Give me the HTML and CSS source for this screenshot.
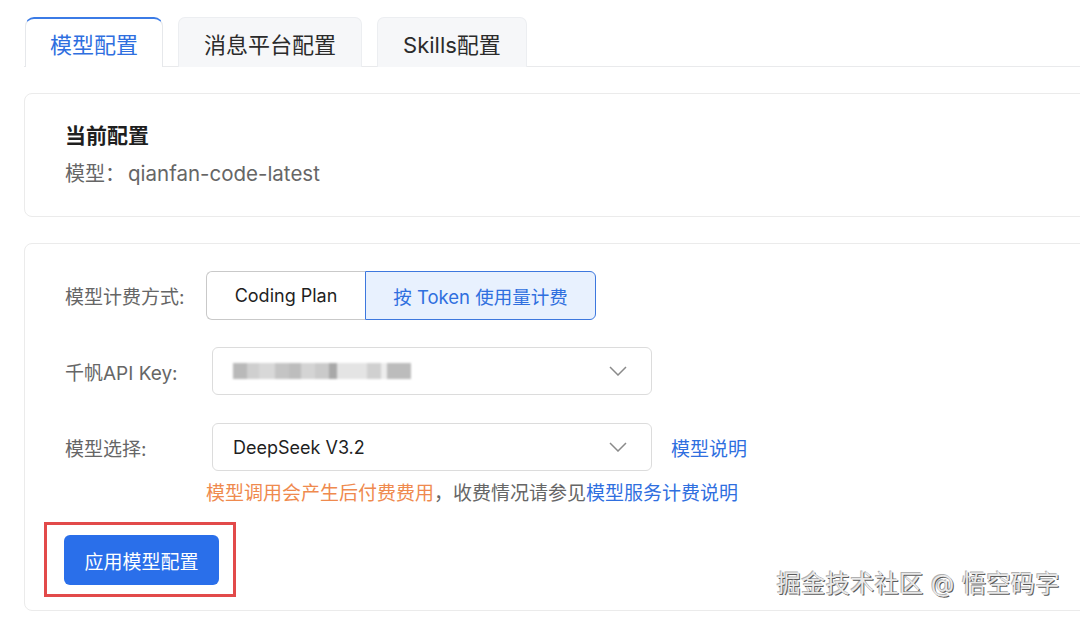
FILE: index.html
```html
<!DOCTYPE html>
<html lang="zh-CN">
<head>
    <meta charset="UTF-8">
    <meta name="viewport" content="width=device-width, initial-scale=1.0">
    <title>模型配置</title>
    <link rel="stylesheet" href="styles.css">
</head>
<body>
    <div class="page">
        <div class="tabs">
            <button class="tab active">模型配置</button>
            <button class="tab">消息平台配置</button>
            <button class="tab">Skills配置</button>
        </div>

        <!-- Current config -->
        <div class="card current">
            <div class="card-title">当前配置</div>
            <div class="card-sub">模型：<span class="model-name">qianfan-code-latest</span></div>
        </div>

        <!-- Config form -->
        <div class="card form">
            <div class="row">
                <label class="label label-narrow">模型计费方式:</label>
                <div class="segmented">
                    <button class="seg">Coding Plan</button>
                    <button class="seg active">按 Token 使用量计费</button>
                </div>
            </div>

            <div class="row">
                <label class="label">千帆API Key:</label>
                <div class="select">
                    <div class="masked">
                        <span style="width:14px;background:#b9b9b9"></span>
                        <span style="width:12px;background:#cfcfcf"></span>
                        <span style="width:16px;background:#d8d8d8"></span>
                        <span style="width:14px;background:#c4c4c4"></span>
                        <span style="width:12px;background:#bdbdbd"></span>
                        <span style="width:14px;background:#d4d4d4"></span>
                        <span style="width:14px;background:#cacaca"></span>
                        <span style="width:8px;background:#a8a8a8"></span>
                        <span style="width:30px;background:#e4e4e4"></span>
                        <span style="width:14px;background:#d0d0d0"></span>
                        <span style="width:6px;background:#ededed"></span>
                        <span style="width:24px;background:#bcbcbc"></span>
                    </div>
                    <svg class="chevron" width="18" height="10" viewBox="0 0 18 10"><path d="M1 1l8 8 8-8" fill="none" stroke="#8a8a8a" stroke-width="1.5"/></svg>
                </div>
            </div>

            <div class="row">
                <label class="label">模型选择:</label>
                <div class="select">
                    <span class="select-value">DeepSeek V3.2</span>
                    <svg class="chevron" width="18" height="10" viewBox="0 0 18 10"><path d="M1 1l8 8 8-8" fill="none" stroke="#8a8a8a" stroke-width="1.5"/></svg>
                </div>
                <a href="#" class="link">模型说明</a>
            </div>

            <div class="hint">
                <span class="warn">模型调用会产生后付费费用</span>，收费情况请参见<a href="#" class="link">模型服务计费说明</a>
            </div>

            <div class="highlight">
                <button class="primary">应用模型配置</button>
            </div>
        </div>
    </div>

    <div class="watermark">掘金技术社区 @ 悟空码字</div>
</body>
</html>
```

FILE: styles.css
```css
:root {
    --blue: #2f6fdf;
    --text: #1f1f1f;
    --muted: #666;
    --line: #e9eaec;
}
* {
    box-sizing: border-box;
    margin: 0;
    padding: 0;
}
body {
    font-family: Inter, "Noto Sans CJK SC", sans-serif;
    background: #fff;
    color: var(--text);
    width: 1080px;
    height: 617px;
    overflow: hidden;
    position: relative;
}
.page {
    padding: 17px 0 0 24px;
    overflow: hidden;
}
.tabs {
    display: flex;
    gap: 15px;
    border-bottom: 1px solid var(--line);
    padding-left: 1px;
}
.tab {
    height: 50px;
    padding: 0 25px;
    font-family: inherit;
    font-size: 22px;
    color: #2b2b2b;
    background: #f6f7f9;
    border: 1px solid #eceef1;
    border-bottom: none;
    border-radius: 7px 7px 0 0;
    margin-bottom: -1px;
    cursor: pointer;
}
.tab.active {
    padding: 0 24px;
    color: var(--blue);
    background: #fff;
    border-top: 2px solid #3b7be6;
    border-color: #3b7be6 #e6e8eb #fff;
    border-radius: 9px 9px 0 0;
}
.card {
    border: 1px solid #ebebeb;
    border-radius: 8px;
    margin-right: -20px;
    background: #fff;
}
.current {
    margin-top: 26px;
    padding: 28px 40px 28px;
}
.card-title {
    font-size: 21px;
    font-weight: 700;
    line-height: 28px;
    margin-bottom: 10px;
}
.card-sub {
    font-size: 20px;
    line-height: 28px;
    color: var(--muted);
}
.model-name {
    font-size: 20.5px;
    margin-left: 3px;
}
.form {
    margin-top: 26px;
    padding: 27px 40px 13px;
}
.row {
    display: flex;
    align-items: center;
    margin-bottom: 27px;
}
.row:nth-child(2) {
    margin-bottom: 28px;
}
.row:nth-child(3) {
    margin-bottom: 11px;
}
.label {
    width: 147px;
    flex-shrink: 0;
    font-size: 19px;
    color: var(--muted);
}
.label-narrow {
    width: 141px;
}
.segmented {
    display: flex;
    height: 49px;
}
.seg {
    font-family: inherit;
    font-size: 18px;
    color: var(--text);
    background: #fff;
    border: 1px solid #c9c9c9;
    padding: 0 20px;
    cursor: pointer;
}
.seg:first-child {
    width: 159px;
    border-radius: 6px 0 0 6px;
    border-right: none;
}
.seg.active {
    width: 231px;
    font-size: 18.5px;
    color: var(--blue);
    background: #e8f1fe;
    border: 1.5px solid #3d78de;
    border-radius: 0 6px 6px 0;
}
.select {
    width: 440px;
    height: 48px;
    border: 1px solid #dcdcdc;
    border-radius: 6px;
    display: flex;
    align-items: center;
    justify-content: space-between;
    padding: 0 24px 0 20px;
}
.select-value {
    font-size: 18px;
}
.masked {
    display: flex;
    height: 16px;
    filter: blur(1px);
}
.masked span {
    height: 100%;
}
.link {
    color: var(--blue);
    text-decoration: none;
    font-size: 19px;
}
.row .link {
    margin-left: 19px;
}
.hint {
    margin-left: 141px;
    font-size: 19px;
    line-height: 24px;
    color: var(--muted);
}
.warn {
    color: #ef8a4e;
}
.highlight {
    display: inline-block;
    margin: 16px 0 0 -21px;
    border: 3px solid #e24a4a;
    padding: 10px 14px 9px 17px;
}
.primary {
    width: 155px;
    height: 50px;
    background: #2a6fea;
    color: #fff;
    border: none;
    border-radius: 6px;
    font-family: inherit;
    font-size: 19px;
    cursor: pointer;
}
.watermark {
    position: absolute;
    right: 20px;
    bottom: 18px;
    font-size: 24px;
    color: #e9e9e9;
    text-shadow: 1px 1px 0 #5a5a5a, -1px -1px 0 #b0b0b0;
    letter-spacing: 0.5px;
}
```
